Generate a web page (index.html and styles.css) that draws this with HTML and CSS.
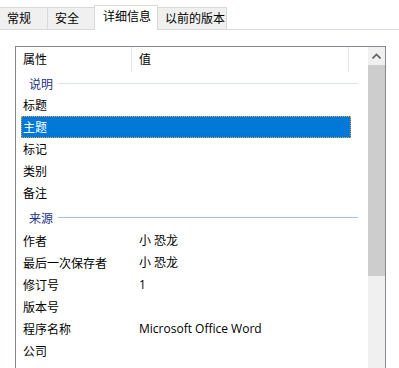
FILE: index.html
```html
<!DOCTYPE html>
<html lang="zh-CN">
<head>
<meta charset="utf-8">
<link rel="stylesheet" href="styles.css">
</head>
<body>
<div class="tabs">
  <div class="tab t1">常规</div>
  <div class="tab t2">安全</div>
  <div class="tab active t3">详细信息</div>
  <div class="tab t4">以前的版本</div>
</div>
<div class="page">
  <div class="listbox">
    <div class="list">
      <div class="head">
        <div class="hcell c1">属性</div>
        <div class="hcell c2">值</div>
        <div class="hcell c3"></div>
      </div>
      <div class="group g1"><span>说明</span><i></i></div>
      <div class="row"><span class="k">标题</span><span class="v"></span></div>
      <div class="row sel"><span class="k">主题</span><span class="v"></span></div>
      <div class="row"><span class="k">标记</span><span class="v"></span></div>
      <div class="row"><span class="k">类别</span><span class="v"></span></div>
      <div class="row"><span class="k">备注</span><span class="v"></span></div>
      <div class="group g2"><span>来源</span><i></i></div>
      <div class="row"><span class="k">作者</span><span class="v">小 恐龙</span></div>
      <div class="row"><span class="k">最后一次保存者</span><span class="v">小 恐龙</span></div>
      <div class="row"><span class="k">修订号</span><span class="v">1</span></div>
      <div class="row"><span class="k">版本号</span><span class="v"></span></div>
      <div class="row"><span class="k">程序名称</span><span class="v">Microsoft Office Word</span></div>
      <div class="row"><span class="k">公司</span><span class="v"></span></div>
    </div>
    <div class="scroll">
      <div class="sbtn"><svg width="9" height="6" viewBox="0 0 9 6"><path d="M0.5 5.5 L4.5 1.5 L8.5 5.5" fill="none" stroke="#606060" stroke-width="1.6"/></svg></div>
      <div class="thumb"></div>
      <div class="track"></div>
    </div>
  </div>
</div>
</body>
</html>
```

FILE: styles.css
```css
html, body {
  margin: 0;
  padding: 0;
  background: #ffffff;
  width: 399px;
  height: 368px;
  overflow: hidden;
  font-family: "Noto Sans CJK SC", "Noto Sans", sans-serif;
  font-size: 12px;
  color: #000;
}
.tabs {
  display: flex;
  align-items: flex-end;
  height: 29px;
  border-bottom: 1px solid #d9d9d9;
  padding-left: 0;
}
.tab {
  box-sizing: border-box;
  height: 22px;
  background: #f0f0f0;
  border: 1px solid #d9d9d9;
  border-bottom: none;
  margin-right: -1px;
  line-height: 20px;
  padding-left: 7px;
  color: #000;
}
.t1 { width: 49px; margin-left: -1px; }
.t2 { width: 48px; }
.t3 { width: 64px; }
.t4 { width: 70px; }
.tab.active {
  background: #fff;
  height: 25px;
  margin-bottom: -1px;
  position: relative;
  z-index: 1;
  line-height: 20px;
  padding-left: 8px;
}
.page {
  padding: 16px 0 0 15px;
}
.listbox {
  width: 371px;
  height: 340px;
  box-sizing: border-box;
  border: 1px solid #828790;
  display: flex;
}
.list {
  flex: 1;
  display: flex;
  flex-direction: column;
}
.head {
  display: flex;
  height: 25px;
  flex: none;
}
.hcell {
  line-height: 24px;
  padding-left: 7px;
  box-sizing: border-box;
}
.c1 { width: 116px; border-right: 1px solid #e5e5e5; height: 25px; }
.c2 { width: 217px; border-right: 1px solid #e5e5e5; height: 25px; }
.group {
  display: flex;
  align-items: center;
  height: 22px;
  padding-left: 13px;
  color: #1e3287;
  flex: none;
}
.group i {
  display: block;
  height: 1px;
  width: 300px;
  margin-left: 5px;
}
.g1 i { background: #dde3ee; }
.g2 { height: 26px; }
.g2 i { background: #a5bde0; }
.row {
  display: flex;
  height: 22px;
  line-height: 21px;
  flex: none;
  width: 330px;
  margin-left: 5px;
  box-sizing: border-box;
}
.row .k { width: 116px; padding-left: 2px; flex: none; }
.row .v { font-family: "Open Sans", "Noto Sans CJK SC", sans-serif; }
.row.sel {
  background: #0078d7;
  color: #fff;
  outline: 1px dotted #e8a040;
  outline-offset: -1px;
}
.scroll {
  width: 17px;
  flex: none;
  background: #f0f0f0;
  display: flex;
  flex-direction: column;
}
.sbtn {
  height: 18px;
  display: flex;
  align-items: center;
  justify-content: center;
}
.thumb {
  height: 211px;
  background: #cdcdcd;
}
```
